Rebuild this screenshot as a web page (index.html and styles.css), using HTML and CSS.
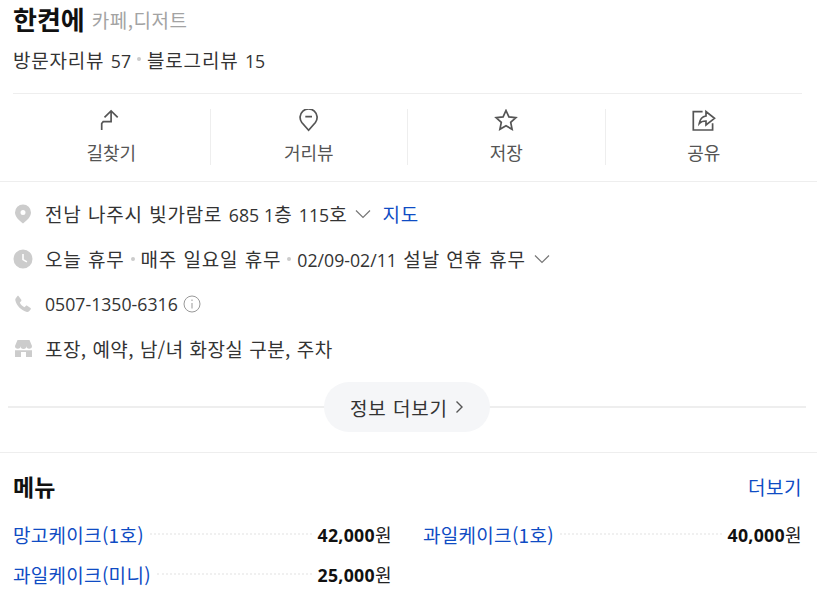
FILE: index.html
```html
<!DOCTYPE html>
<html lang="ko">

<head>
    <meta charset="UTF-8">
    <meta name="viewport" content="width=device-width, initial-scale=1.0">
    <title>한켠에</title>
    <link rel="stylesheet" href="styles.css">
</head>

<body>
    <section class="summary">
        <div class="title-row">
            <h1 class="place-name">한켠에</h1>
            <span class="place-category">카페,디저트</span>
        </div>
        <div class="review-row">
            <span>방문자리뷰 <span class="num">57</span></span>
            <span class="dot"></span>
            <span>블로그리뷰 <span class="num">15</span></span>
        </div>
        <div class="actions">
            <div class="action">
                <svg class="action-icon" viewBox="0 0 24 24"><path d="M2.700 21V14.500L4.200 12.700H12.100V2.500M5.500 8.300L12.100 2L18.700 8.300"/></svg>
                <span>길찾기</span>
            </div>
            <div class="action">
                <svg class="action-icon" viewBox="0 0 24 24"><path d="M11.600 21.300L4.800 13.500A8.500 8.500 0 1 1 18.400 13.500ZM8.300 7.700H15"/></svg>
                <span>거리뷰</span>
            </div>
            <div class="action">
                <svg class="action-icon" viewBox="0 0 24 24"><path d="M12 1.500l2.900 6.400 7 .8-5.200 4.700 1.400 6.900-6.100-3.500-6.100 3.500 1.400-6.900-5.200-4.700 7-.8z"/></svg>
                <span>저장</span>
            </div>
            <div class="action">
                <svg class="action-icon" viewBox="0 0 24 24"><path d="M10.600 2.700H1.300V21H20.600V14.300M7.300 14.500C8 10 10.500 7.500 14 7V2.500L22.500 9.300L14 16V12C11 12 9 12.500 7.300 14.500Z"/></svg>
                <span>공유</span>
            </div>
        </div>
    </section>

    <section class="info">
        <div class="info-row">
            <svg class="info-icon" viewBox="0 0 20 20"><path fill-rule="evenodd" d="M10 .5a8 8 0 0 1 8 8c0 4-4 8-8 11-4-3-8-7-8-11a8 8 0 0 1 8-8zm0 5.500a2.500 2.500 0 1 0 0 5 2.500 2.500 0 0 0 0-5z"/></svg>
            <span>전남 나주시 빛가람로 <span class="num">685 1</span>층 <span class="num">115</span>호</span>
            <svg class="chevron" viewBox="0 0 16 10"><path d="M1 1.500l7 7 7-7"/></svg>
            <a class="link map-link">지도</a>
        </div>
        <div class="info-row">
            <svg class="info-icon" viewBox="0 0 20 20"><path fill-rule="evenodd" d="M10 .5a9.500 9.500 0 1 1 0 19 9.500 9.500 0 0 1 0-19zM9.200 5v6l4.300 2.500.8-1.300-3.500-2V5z"/></svg>
            <span>오늘 휴무</span>
            <span class="dot"></span>
            <span>매주 일요일 휴무</span>
            <span class="dot"></span>
            <span><span class="num">02/09-02/11</span> 설날 연휴 휴무</span>
            <svg class="chevron" viewBox="0 0 16 10"><path d="M1 1.500l7 7 7-7"/></svg>
        </div>
        <div class="info-row">
            <svg class="info-icon" viewBox="0 0 20 20"><path d="M5.500 2l2.800 3.800c.3.500.2 1-.2 1.400L6.800 8.600c.8 2 2.500 3.800 4.600 4.700l1.400-1.400c.4-.4 1-.5 1.400-.2l3.300 2.400c.5.400.5 1 .1 1.500l-1.500 1.700c-.6.600-1.400.9-2.200.7C8.500 16.700 3.500 11.700 2.300 6.300c-.2-.8.100-1.600.7-2.200l1.300-1.900c.4-.5.900-.5 1.200-.2z"/></svg>
            <span class="num">0507-1350-6316</span>
            <svg class="tip-icon" viewBox="0 0 18 18"><circle cx="9" cy="9" r="8"/><path d="M9 8v5.500M9 4.500v1.500"/></svg>
        </div>
        <div class="info-row">
            <svg class="info-icon" viewBox="0 0 20 20"><path d="M4.500 1H16.500L19 7A2.800 2.800 0 0 1 13.400 7A2.900 2.900 0 0 1 7.600 7A2.800 2.800 0 0 1 2 7ZM2 11.200H19V18H13V13H8V18H2Z"/></svg>
            <span class="tight">포장, 예약, 남/녀 화장실 구분, 주차</span>
        </div>
        <div class="more-row">
            <button class="more-btn">정보 더보기
                <svg class="more-arrow" viewBox="0 0 9 14"><path d="M1.500 1.500L7 7l-5.500 5.500"/></svg>
            </button>
        </div>
    </section>

    <section class="menu">
        <div class="menu-head">
            <h2 class="menu-title">메뉴</h2>
            <a class="link">더보기</a>
        </div>
        <ul class="menu-list">
            <li class="menu-item"><a class="link">망고케이크(1호)</a><span class="leader"></span><span class="price"><b class="num">42,000</b>원</span></li>
            <li class="menu-item"><a class="link">과일케이크(1호)</a><span class="leader"></span><span class="price"><b class="num">40,000</b>원</span></li>
            <li class="menu-item"><a class="link">과일케이크(미니)</a><span class="leader"></span><span class="price"><b class="num">25,000</b>원</span></li>
        </ul>
    </section>
</body>

</html>
```

FILE: styles.css
```css
html,
body {
    height: 100%;
}

body {
    margin: 0;
    width: 817px;
    height: 598px;
    overflow: hidden;
    background-color: #fff;
    color: #333;
    font-family: "Noto Sans CJK KR", "Noto Sans", sans-serif;
    font-size: 19px;
    letter-spacing: .8px;
    word-spacing: .3px;
}

/* digits keep their own narrower size next to the wider hangul */
.num {
    font-family: "Open Sans", "Noto Sans CJK KR", sans-serif;
    font-size: 17.7px;
    letter-spacing: 0;
}

.tight {
    letter-spacing: .4px;
}

.summary {
    padding: 0 15px 0 13px;
    border-bottom: 1px solid #eee;
    height: 182px;
    box-sizing: border-box;
}

.title-row {
    display: flex;
    align-items: center;
    gap: 7px;
    height: 38px;
}

.place-name {
    margin: 0;
    font-size: 26px;
    line-height: 38px;
    font-weight: 700;
    letter-spacing: 0;
    color: #111;
}

.place-category {
    color: #a3a3a3;
    letter-spacing: .5px;
}

.review-row {
    display: flex;
    align-items: center;
    height: 42px;
    margin-bottom: 13px;
}

.dot {
    width: 4px;
    height: 4px;
    margin: 0 6px;
    border-radius: 50%;
    background-color: #ccc;
}

.actions {
    display: flex;
    border-top: 1px solid #eee;
    padding-top: 15px;
}

.action {
    flex: 1;
    height: 56px;
    display: flex;
    flex-direction: column;
    align-items: center;
    gap: 6px;
    color: #555;
    font-size: 18px;
    letter-spacing: 0;
    border-right: 1px solid #eee;
}

.action:last-child {
    border-right: 0;
}

.action-icon {
    width: 24px;
    height: 24px;
    fill: none;
    stroke: #555;
    stroke-width: 1.700;
}

.info {
    position: relative;
    height: 271px;
    padding: 9px 13px 0;
    box-sizing: border-box;
    border-bottom: 1px solid #eee;
}

.info-row {
    display: flex;
    align-items: center;
    height: 45px;
}

.info-icon {
    width: 20px;
    height: 20px;
    margin-right: 12px;
    fill: #ccc;
}

.chevron {
    width: 16px;
    height: 10px;
    margin-left: 8px;
    fill: none;
    stroke: #777;
    stroke-width: 1.200;
}

.tip-icon {
    width: 18px;
    height: 18px;
    margin-left: 5px;
    fill: none;
    stroke: #999;
    stroke-width: 1;
}

.map-link {
    margin-left: 11px;
}

.link {
    color: #0f4cc4;
}

.more-row {
    position: absolute;
    left: 8px;
    right: 11px;
    top: 200px;
    height: 50px;
    display: flex;
    justify-content: center;
    align-items: center;
    background: linear-gradient(#eee, #eee) center / 100% 2px no-repeat;
}

.more-btn {
    width: 166px;
    height: 50px;
    border: 0;
    border-radius: 25px;
    background-color: #f5f6f8;
    color: #333;
    font-family: inherit;
    font-size: 19px;
    letter-spacing: .8px;
    word-spacing: .3px;
    display: flex;
    justify-content: center;
    align-items: center;
    gap: 7px;
}

.more-arrow {
    width: 9px;
    height: 14px;
    fill: none;
    stroke: #555;
    stroke-width: 1.400;
}

.menu {
    padding: 0 15px 0 13px;
}

.menu-head {
    display: flex;
    justify-content: space-between;
    align-items: center;
    height: 66px;
}

.menu-title {
    margin: 0;
    font-size: 23px;
    font-weight: 700;
    letter-spacing: 0;
    color: #111;
}

.menu-head .link {
    letter-spacing: .5px;
}

.menu-list {
    list-style: none;
    margin: -5px 0 0;
    padding: 0;
    display: grid;
    grid-template-columns: 379px 379px;
    column-gap: 31px;
}

.menu-item {
    display: flex;
    align-items: center;
    height: 40px;
}

.menu-item .link {
    letter-spacing: .3px;
}

.leader {
    flex: 1;
    margin: 0 6px;
    border-top: 2px dotted #f0f0f0;
}

.price {
    color: #222;
    font-size: 18px;
    letter-spacing: .5px;
}

.price b {
    font-weight: 700;
    letter-spacing: .3px;
    color: #111;
}
```
